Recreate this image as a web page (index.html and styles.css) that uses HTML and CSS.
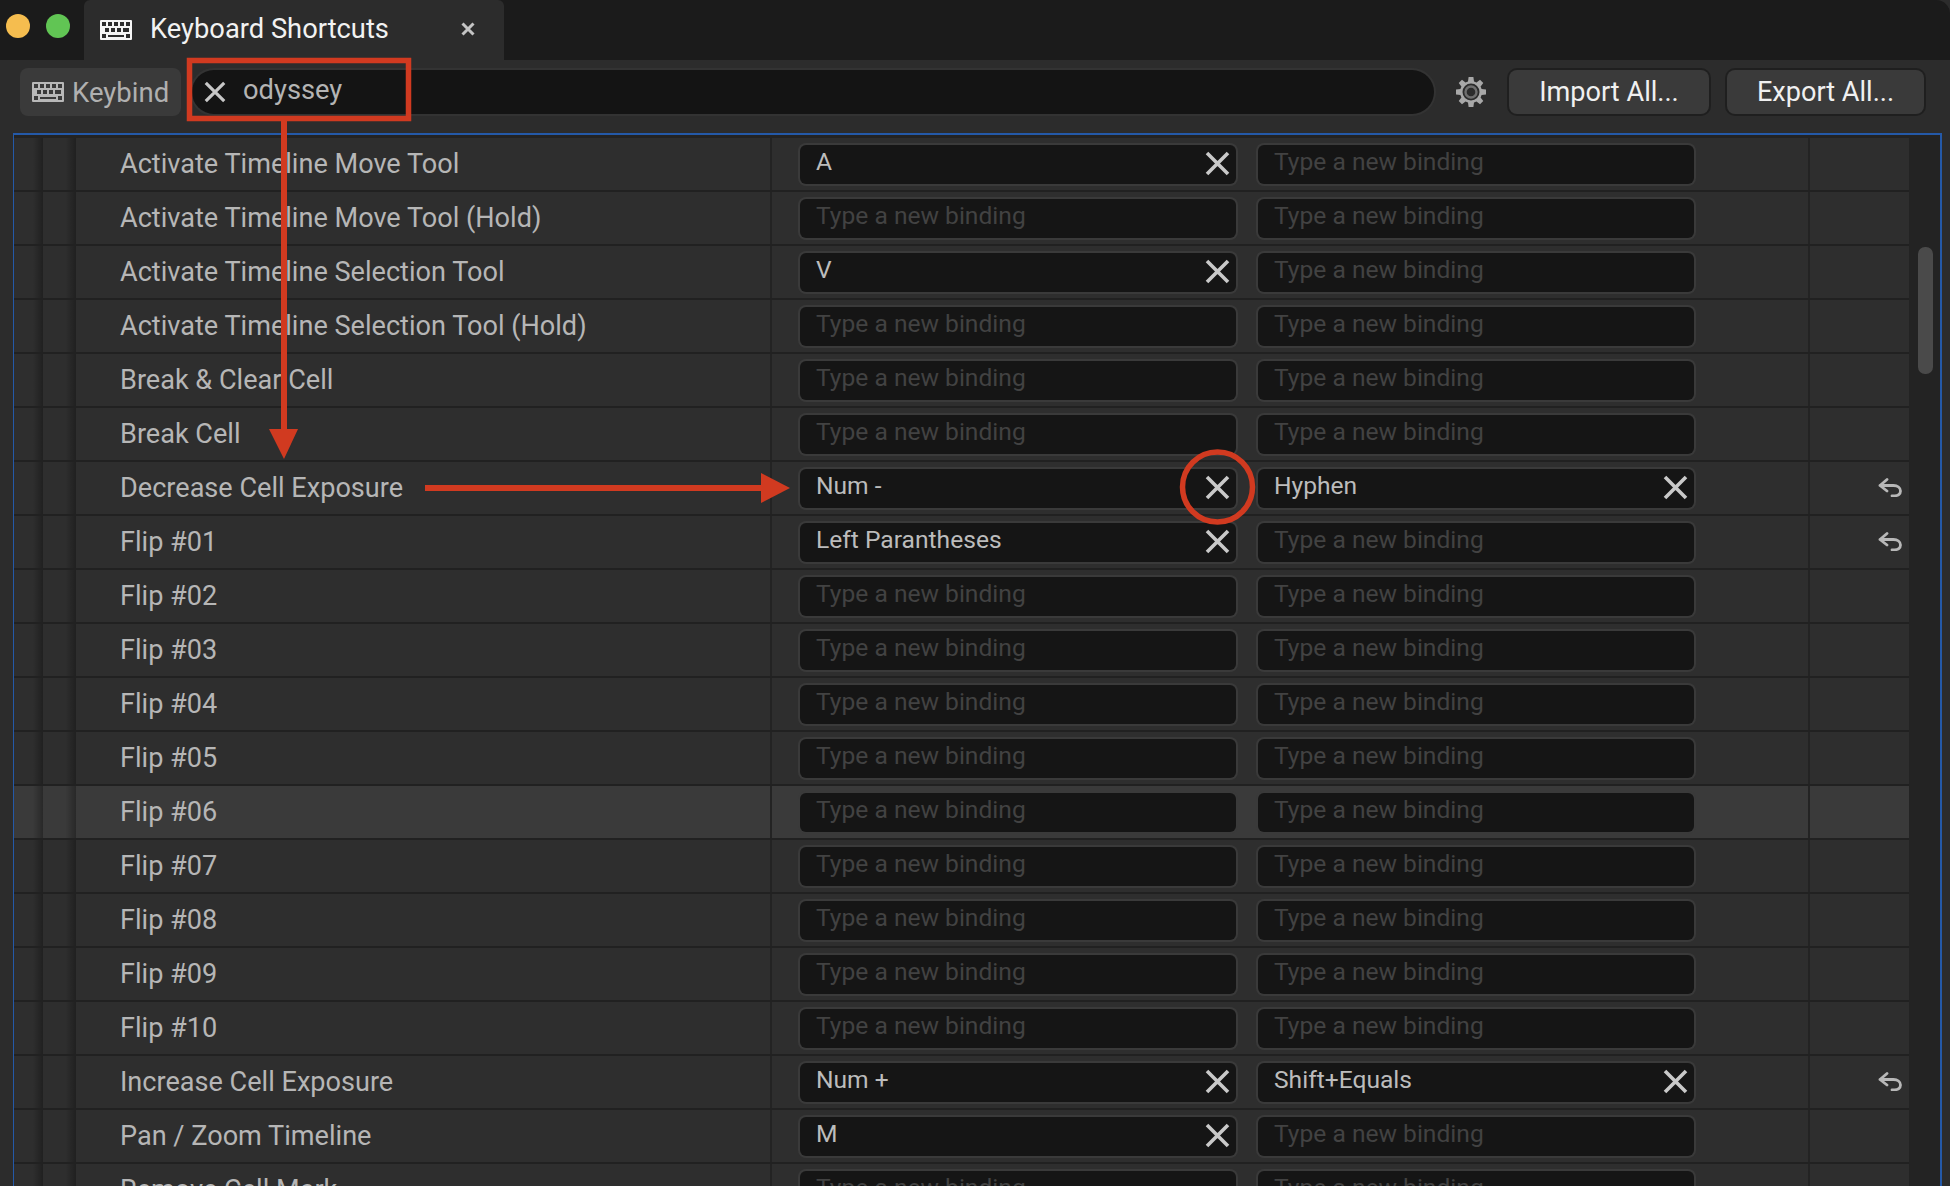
FILE: index.html
```html
<!DOCTYPE html>
<html lang="en">
<head>
<meta charset="utf-8">
<title>Keyboard Shortcuts</title>
<link rel="stylesheet" href="styles.css">
</head>
<body>
<svg class="sprite" xmlns="http://www.w3.org/2000/svg">
  <symbol id="kb" viewBox="0 0 32 20">
    <path fill-rule="evenodd" d="M1 0h30a1 1 0 0 1 1 1v18a1 1 0 0 1-1 1H1a1 1 0 0 1-1-1V1a1 1 0 0 1 1-1zM2 2v4h4V2zM8 2v4h4V2zM14 2v4h4V2zM20 2v4h4V2zM26 2v4h4V2zM5 8v4h4V8zM11 8v4h4V8zM17 8v4h4V8zM23 8v4h6V8zM2 14v4h4v-4zM26 14v4h4v-4zM8 15v2h16v-2z"/>
  </symbol>
  <symbol id="x" viewBox="0 0 25 25">
    <path d="M2 2L23 23M23 2L2 23" fill="none" stroke="currentColor" stroke-width="3.6"/>
  </symbol>
  <symbol id="undo" viewBox="0 0 24 19">
    <path d="M9 1.500L2 7.500L9 13M2 7.500H15.500C19.500 7.500 22.500 9.800 22.500 13C22.500 16 20 17.800 16.500 17.800H14" fill="none" stroke="currentColor" stroke-width="2.800" stroke-linecap="round" stroke-linejoin="round"/>
  </symbol>
</svg>
<div class="app">
  <header class="titlebar">
    <div class="lights"><span class="light yellow"></span><span class="light green"></span></div>
    <div class="tab">
      <svg class="tab-kb"><use href="#kb"/></svg>
      <span class="tab-title">Keyboard Shortcuts</span>
      <svg class="tab-close" viewBox="0 0 14 14"><path d="M1.500 1.500L12.500 12.500M12.500 1.500L1.500 12.500" fill="none" stroke="currentColor" stroke-width="3"/></svg>
    </div>
  </header>
  <div class="toolbar">
    <div class="filter-chip"><svg class="chip-kb"><use href="#kb"/></svg><span>Keybind</span></div>
    <div class="search"><svg class="search-x"><use href="#x"/></svg><span>odyssey</span></div>
    <svg class="gear" viewBox="0 0 30 30">
      <path fill-rule="evenodd" d="M12.600 0h4.800l.6 4.400 2.500 1 3.500-2.700 3.300 3.300-2.700 3.500 1 2.500 4.400.6v4.800l-4.400.6-1 2.500 2.700 3.500-3.300 3.300-3.500-2.700-2.500 1-.6 4.400h-4.800l-.6-4.400-2.500-1-3.500 2.700-3.300-3.300 2.700-3.500-1-2.500-4.400-.6v-4.800l4.400-.6 1-2.500-2.700-3.500 3.300-3.300 3.500 2.700 2.500-1zM15 6.500a8.500 8.500 0 1 0 0 17 8.500 8.500 0 0 0 0-17z"/>
      <circle cx="15" cy="15" r="5.500" fill="none" stroke="currentColor" stroke-width="2.400" opacity=".55"/>
    </svg>
    <button class="tool-btn import">Import All...</button>
    <button class="tool-btn export">Export All...</button>
  </div>
  <main class="panel">
    <div class="rows">
      <div class="row"><i class="s1"></i><i class="s2"></i><div class="name">Activate Timeline Move Tool</div><div class="binds"><div class="bind set"><span>A</span><svg class="bx"><use href="#x"/></svg></div><div class="bind">Type a new binding</div></div><div class="reset"></div></div>
      <div class="row"><i class="s1"></i><i class="s2"></i><div class="name">Activate Timeline Move Tool (Hold)</div><div class="binds"><div class="bind">Type a new binding</div><div class="bind">Type a new binding</div></div><div class="reset"></div></div>
      <div class="row"><i class="s1"></i><i class="s2"></i><div class="name">Activate Timeline Selection Tool</div><div class="binds"><div class="bind set"><span>V</span><svg class="bx"><use href="#x"/></svg></div><div class="bind">Type a new binding</div></div><div class="reset"></div></div>
      <div class="row"><i class="s1"></i><i class="s2"></i><div class="name">Activate Timeline Selection Tool (Hold)</div><div class="binds"><div class="bind">Type a new binding</div><div class="bind">Type a new binding</div></div><div class="reset"></div></div>
      <div class="row"><i class="s1"></i><i class="s2"></i><div class="name">Break &amp; Clear Cell</div><div class="binds"><div class="bind">Type a new binding</div><div class="bind">Type a new binding</div></div><div class="reset"></div></div>
      <div class="row"><i class="s1"></i><i class="s2"></i><div class="name">Break Cell</div><div class="binds"><div class="bind">Type a new binding</div><div class="bind">Type a new binding</div></div><div class="reset"></div></div>
      <div class="row"><i class="s1"></i><i class="s2"></i><div class="name">Decrease Cell Exposure</div><div class="binds"><div class="bind set"><span>Num -</span><svg class="bx"><use href="#x"/></svg></div><div class="bind set"><span>Hyphen</span><svg class="bx"><use href="#x"/></svg></div></div><div class="reset"><svg class="undo"><use href="#undo"/></svg></div></div>
      <div class="row"><i class="s1"></i><i class="s2"></i><div class="name">Flip #01</div><div class="binds"><div class="bind set"><span>Left Parantheses</span><svg class="bx"><use href="#x"/></svg></div><div class="bind">Type a new binding</div></div><div class="reset"><svg class="undo"><use href="#undo"/></svg></div></div>
      <div class="row"><i class="s1"></i><i class="s2"></i><div class="name">Flip #02</div><div class="binds"><div class="bind">Type a new binding</div><div class="bind">Type a new binding</div></div><div class="reset"></div></div>
      <div class="row"><i class="s1"></i><i class="s2"></i><div class="name">Flip #03</div><div class="binds"><div class="bind">Type a new binding</div><div class="bind">Type a new binding</div></div><div class="reset"></div></div>
      <div class="row"><i class="s1"></i><i class="s2"></i><div class="name">Flip #04</div><div class="binds"><div class="bind">Type a new binding</div><div class="bind">Type a new binding</div></div><div class="reset"></div></div>
      <div class="row"><i class="s1"></i><i class="s2"></i><div class="name">Flip #05</div><div class="binds"><div class="bind">Type a new binding</div><div class="bind">Type a new binding</div></div><div class="reset"></div></div>
      <div class="row hover"><i class="s1"></i><i class="s2"></i><div class="name">Flip #06</div><div class="binds"><div class="bind">Type a new binding</div><div class="bind">Type a new binding</div></div><div class="reset"></div></div>
      <div class="row"><i class="s1"></i><i class="s2"></i><div class="name">Flip #07</div><div class="binds"><div class="bind">Type a new binding</div><div class="bind">Type a new binding</div></div><div class="reset"></div></div>
      <div class="row"><i class="s1"></i><i class="s2"></i><div class="name">Flip #08</div><div class="binds"><div class="bind">Type a new binding</div><div class="bind">Type a new binding</div></div><div class="reset"></div></div>
      <div class="row"><i class="s1"></i><i class="s2"></i><div class="name">Flip #09</div><div class="binds"><div class="bind">Type a new binding</div><div class="bind">Type a new binding</div></div><div class="reset"></div></div>
      <div class="row"><i class="s1"></i><i class="s2"></i><div class="name">Flip #10</div><div class="binds"><div class="bind">Type a new binding</div><div class="bind">Type a new binding</div></div><div class="reset"></div></div>
      <div class="row"><i class="s1"></i><i class="s2"></i><div class="name">Increase Cell Exposure</div><div class="binds"><div class="bind set"><span>Num +</span><svg class="bx"><use href="#x"/></svg></div><div class="bind set"><span>Shift+Equals</span><svg class="bx"><use href="#x"/></svg></div></div><div class="reset"><svg class="undo"><use href="#undo"/></svg></div></div>
      <div class="row"><i class="s1"></i><i class="s2"></i><div class="name">Pan / Zoom Timeline</div><div class="binds"><div class="bind set"><span>M</span><svg class="bx"><use href="#x"/></svg></div><div class="bind">Type a new binding</div></div><div class="reset"></div></div>
      <div class="row"><i class="s1"></i><i class="s2"></i><div class="name">Remove Cell Mark</div><div class="binds"><div class="bind">Type a new binding</div><div class="bind">Type a new binding</div></div><div class="reset"></div></div>
    </div>
    <div class="scroll"><div class="thumb"></div></div>
  </main>
  <svg class="annot" viewBox="0 0 1950 1186">
    <g class="annot-g">
      <rect x="189.500" y="60.500" width="219" height="58" fill="none" stroke-width="5.500"/>
      <path d="M284 121V432M425 488H764" fill="none" stroke-width="6"/>
      <path class="head" d="M269 429H298L284 459Z"/>
      <path class="head" d="M761 473L790 488L761 503Z"/>
      <circle cx="1217.500" cy="487" r="35" fill="none" stroke-width="5.500"/>
    </g>
  </svg>
</div>
</body>
</html>
```
FILE: styles.css
```css
* { box-sizing: border-box; }
html, body { margin: 0; height: 100%; background: #2c2c2c; overflow: hidden; }
body { font-family: Roboto, "Noto Sans", sans-serif; color: #b6b6b6; }
.sprite { display: none; }
svg { fill: currentColor; display: block; }

.app { position: relative; width: 1950px; height: 1186px; display: flex; flex-direction: column; overflow: hidden; }

.titlebar { height: 60px; background: #1b1b1b; display: flex; border-top-right-radius: 14px; flex: none; }
.lights { width: 84px; display: flex; gap: 16px; padding: 14px 0 0 6px; }
.light { width: 24px; height: 24px; border-radius: 50%; }
.yellow { background: #f5bd4f; }
.green { background: #61c554; }
.tab { width: 420px; background: #2c2c2c; display: flex; align-items: center; padding: 0 0 0 16px; color: #f2f2f2; border-top-left-radius: 6px; border-top-right-radius: 6px; }
.tab-kb { width: 32px; height: 20px; color: #f5f5f5; margin-top: -1px; }
.tab-title { font-size: 27.300px; margin-left: 18px; width: 311px; margin-top: -3px; }
.tab-close { width: 14px; height: 14px; color: #c4c4c4; margin-top: -2px; }

.toolbar { height: 73px; flex: none; display: flex; align-items: flex-start; padding: 8px 0 0 20px; }
.filter-chip { width: 161px; height: 48px; border-radius: 8px; background: #3a3a3a; display: flex; align-items: center; padding-left: 12px; font-size: 27.500px; color: #b0b0b0; }
.chip-kb { width: 32px; height: 20px; margin-right: 8px; color: #b8b8b8; }
.search { margin: 2px 0 0 11px; width: 1242px; height: 44px; border-radius: 22px; background: #141414; box-shadow: 0 0 0 2px #333; display: flex; align-items: center; padding-left: 12px; font-size: 27.300px; color: #b4b4b4; }
.search span { margin: -5px 0 0 17px; }
.search-x { width: 22px; height: 22px; color: #c8c8c8; }
.gear { width: 30px; height: 30px; margin: 9px 0 0 22px; color: #a8a8a8; }
.tool-btn { height: 44px; margin-top: 2px; border: 0; border-radius: 8px; background: #3a3a3a; box-shadow: 0 0 0 2px #1f1f1f; color: #f0f0f0; font: 27.100px Roboto, sans-serif; padding: 0; }
.import { width: 200px; margin-left: 23px; }
.export { width: 197px; margin-left: 18px; }

.panel { flex: 1; min-height: 0; margin: 0 8px 0 13px; border: solid #2459a8; border-width: 2px 2px 0 1px; padding-top: 3px; background: #232323; display: flex; overflow: hidden; }
.rows { width: 1895px; flex: none; }
.row { height: 54px; display: flex; background: #2e2e2e; border-bottom: 2px solid #212121; }
.row.hover { background: #3a3a3a; }
.s1 { width: 29px; background: linear-gradient(90deg, transparent 65%, rgba(0,0,0,.3)); }
.s2 { width: 33px; background: linear-gradient(90deg, transparent 68%, rgba(0,0,0,.3)); }
.name { width: 694px; padding-left: 44px; font-size: 27.100px; line-height: 52px; color: #b6b6b6; white-space: nowrap; }
.binds { width: 1038px; border-left: 2px solid #232323; display: flex; gap: 22px; padding: 7px 0 0 28px; font-size: 24.600px; color: #424242; }
.bind { width: 436px; height: 39px; background: #151515; border-radius: 6px; box-shadow: 0 0 0 2px #3a3a3a; padding-left: 16px; line-height: 34px; display: flex; justify-content: space-between; white-space: nowrap; }
.set { color: #bcbcbc; }
.bx { width: 25px; height: 25px; color: #c9c9c9; margin: 6px 6px 0 0; }
.reset { width: 101px; border-left: 2px solid #232323; display: flex; justify-content: flex-end; padding: 16px 7px 0 0; }
.undo { width: 24px; height: 19px; color: #b8b8b8; }
.scroll { flex: 1; background: #232323; position: relative; }
.thumb { margin: 109px 0 0 9px; width: 15px; height: 127px; border-radius: 7px; background: #4a4a4a; }

.annot { position: absolute; left: 0; top: 0; width: 1950px; height: 1186px; pointer-events: none; }
.annot-g { stroke: #d13a20; fill: none; }
.head { fill: #d13a20; stroke: none; }
```
